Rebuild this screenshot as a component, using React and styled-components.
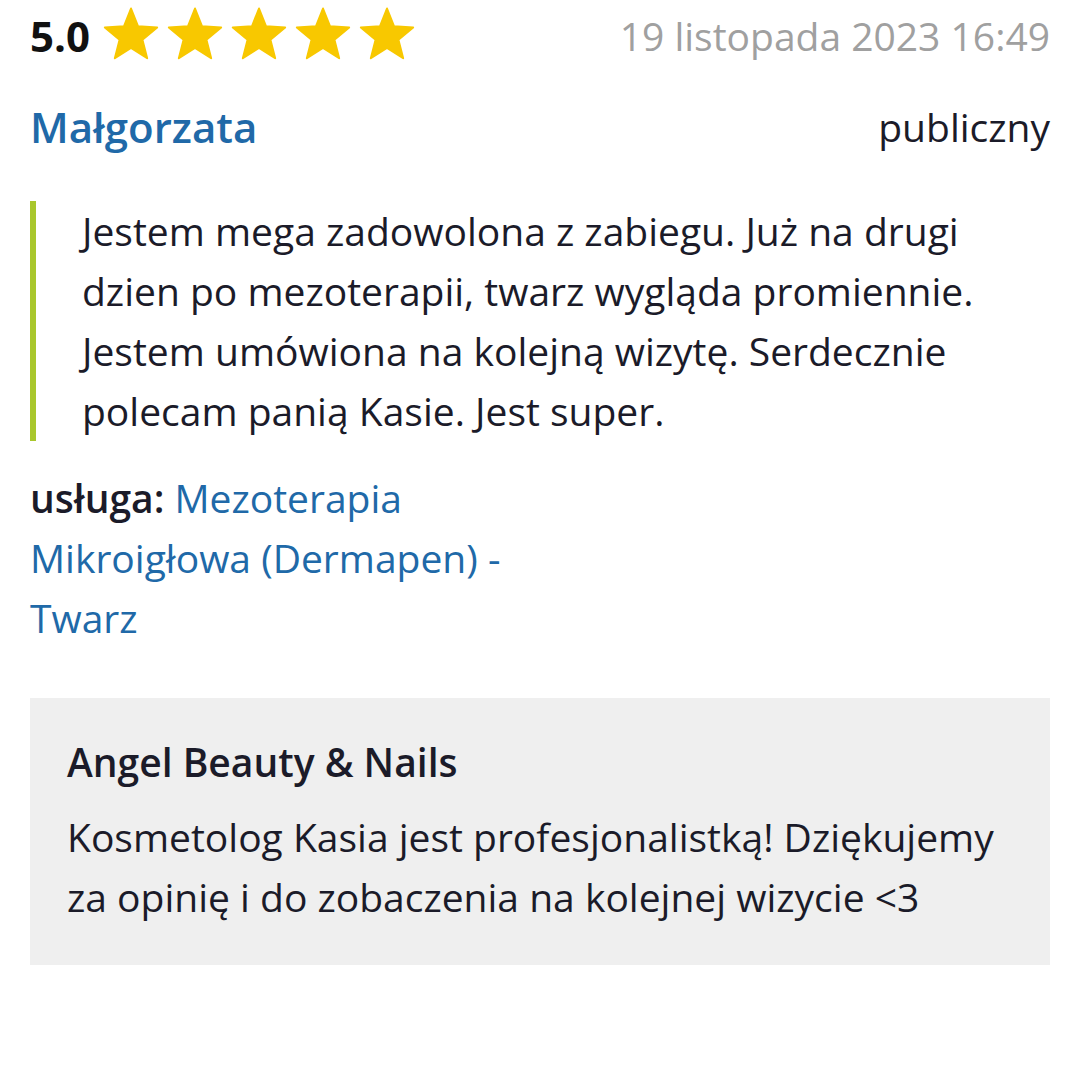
import React from "react";
import styled, { createGlobalStyle } from "styled-components";

const GlobalStyle = createGlobalStyle`
  body {
    margin: 0;
    padding: 0;
    background: #ffffff;
    font-family: "Open Sans", "Noto Sans", sans-serif;
    color: #1b1b29;
  }
`;

const Page = styled.div`
  width: 1080px;
  padding: 0 30px;
  box-sizing: border-box;
`;

const TopRow = styled.div`
  display: flex;
  align-items: center;
  justify-content: space-between;
  height: 67px;
`;

const Rating = styled.div`
  display: flex;
  align-items: center;
`;

const Score = styled.span`
  font-size: 42px;
  font-weight: 700;
  color: #111;
  margin-right: 13px;
  padding-top: 4px;
`;

const Stars = styled.div`
  display: flex;
  gap: 8px;
`;

const DateText = styled.span`
  font-size: 39px;
  color: #a0a0a0;
  padding-top: 3px;
`;

const NameRow = styled.div`
  display: flex;
  align-items: center;
  justify-content: space-between;
  margin-top: 27px;
  height: 64px;
`;

const Author = styled.span`
  font-size: 42px;
  font-weight: 600;
  color: #2069a8;
`;

const Visibility = styled.span`
  font-size: 39px;
  color: #1b1b29;
`;

const Quote = styled.blockquote`
  margin: 43px 0 0;
  padding: 0 0 0 46px;
  border-left: 6px solid #a9c72c;
  font-size: 39px;
  line-height: 60px;
  color: #1b1b29;
`;

const Service = styled.div`
  margin-top: 27px;
  width: 520px;
  font-size: 39px;
  line-height: 60px;
`;

const ServiceLabel = styled.span`
  font-weight: 600;
  color: #1b1b29;
`;

const ServiceLink = styled.a`
  color: #2069a8;
  text-decoration: none;
`;

const Reply = styled.div`
  margin-top: 50px;
  background: #efefef;
  padding: 34px 37px 38px;
`;

const ReplyTitle = styled.div`
  font-size: 39px;
  line-height: 60px;
  font-weight: 600;
  color: #1b1b29;
`;

const ReplyText = styled.p`
  margin: 15px 0 0;
  font-size: 39px;
  line-height: 60px;
  color: #1b1b29;
`;

const Star = () => (
  <svg width="56" height="54" viewBox="0 0 56 54">
    <path
      d="M28 1.5 L35.05 19.29 L54.15 20.5 L39.41 32.71 L44.16 51.25 L28 41 L11.84 51.25 L16.59 32.71 L1.85 20.5 L20.95 19.29 Z"
      fill="#f8c800"
      stroke="#f8c800"
      strokeWidth="2"
      strokeLinejoin="round"
    />
  </svg>
);

export default function App() {
  return (
    <Page>
      <GlobalStyle />
      <TopRow>
        <Rating>
          <Score>5.0</Score>
          <Stars>
            {[0, 1, 2, 3, 4].map((i) => (
              <Star key={i} />
            ))}
          </Stars>
        </Rating>
        <DateText>19 listopada 2023 16:49</DateText>
      </TopRow>
      <NameRow>
        <Author>Małgorzata</Author>
        <Visibility>publiczny</Visibility>
      </NameRow>
      <Quote>
        Jestem mega zadowolona z zabiegu. Już na drugi dzien po mezoterapii,
        twarz wygląda promiennie. Jestem umówiona na kolejną wizytę. Serdecznie
        polecam panią Kasie. Jest super.
      </Quote>
      <Service>
        <ServiceLabel>usługa:</ServiceLabel>{" "}
        <ServiceLink href="#">Mezoterapia Mikroigłowa (Dermapen) - Twarz</ServiceLink>
      </Service>
      <Reply>
        <ReplyTitle>Angel Beauty &amp; Nails</ReplyTitle>
        <ReplyText>
          Kosmetolog Kasia jest profesjonalistką! Dziękujemy za opinię i do
          zobaczenia na kolejnej wizycie &lt;3
        </ReplyText>
      </Reply>
    </Page>
  );
}
